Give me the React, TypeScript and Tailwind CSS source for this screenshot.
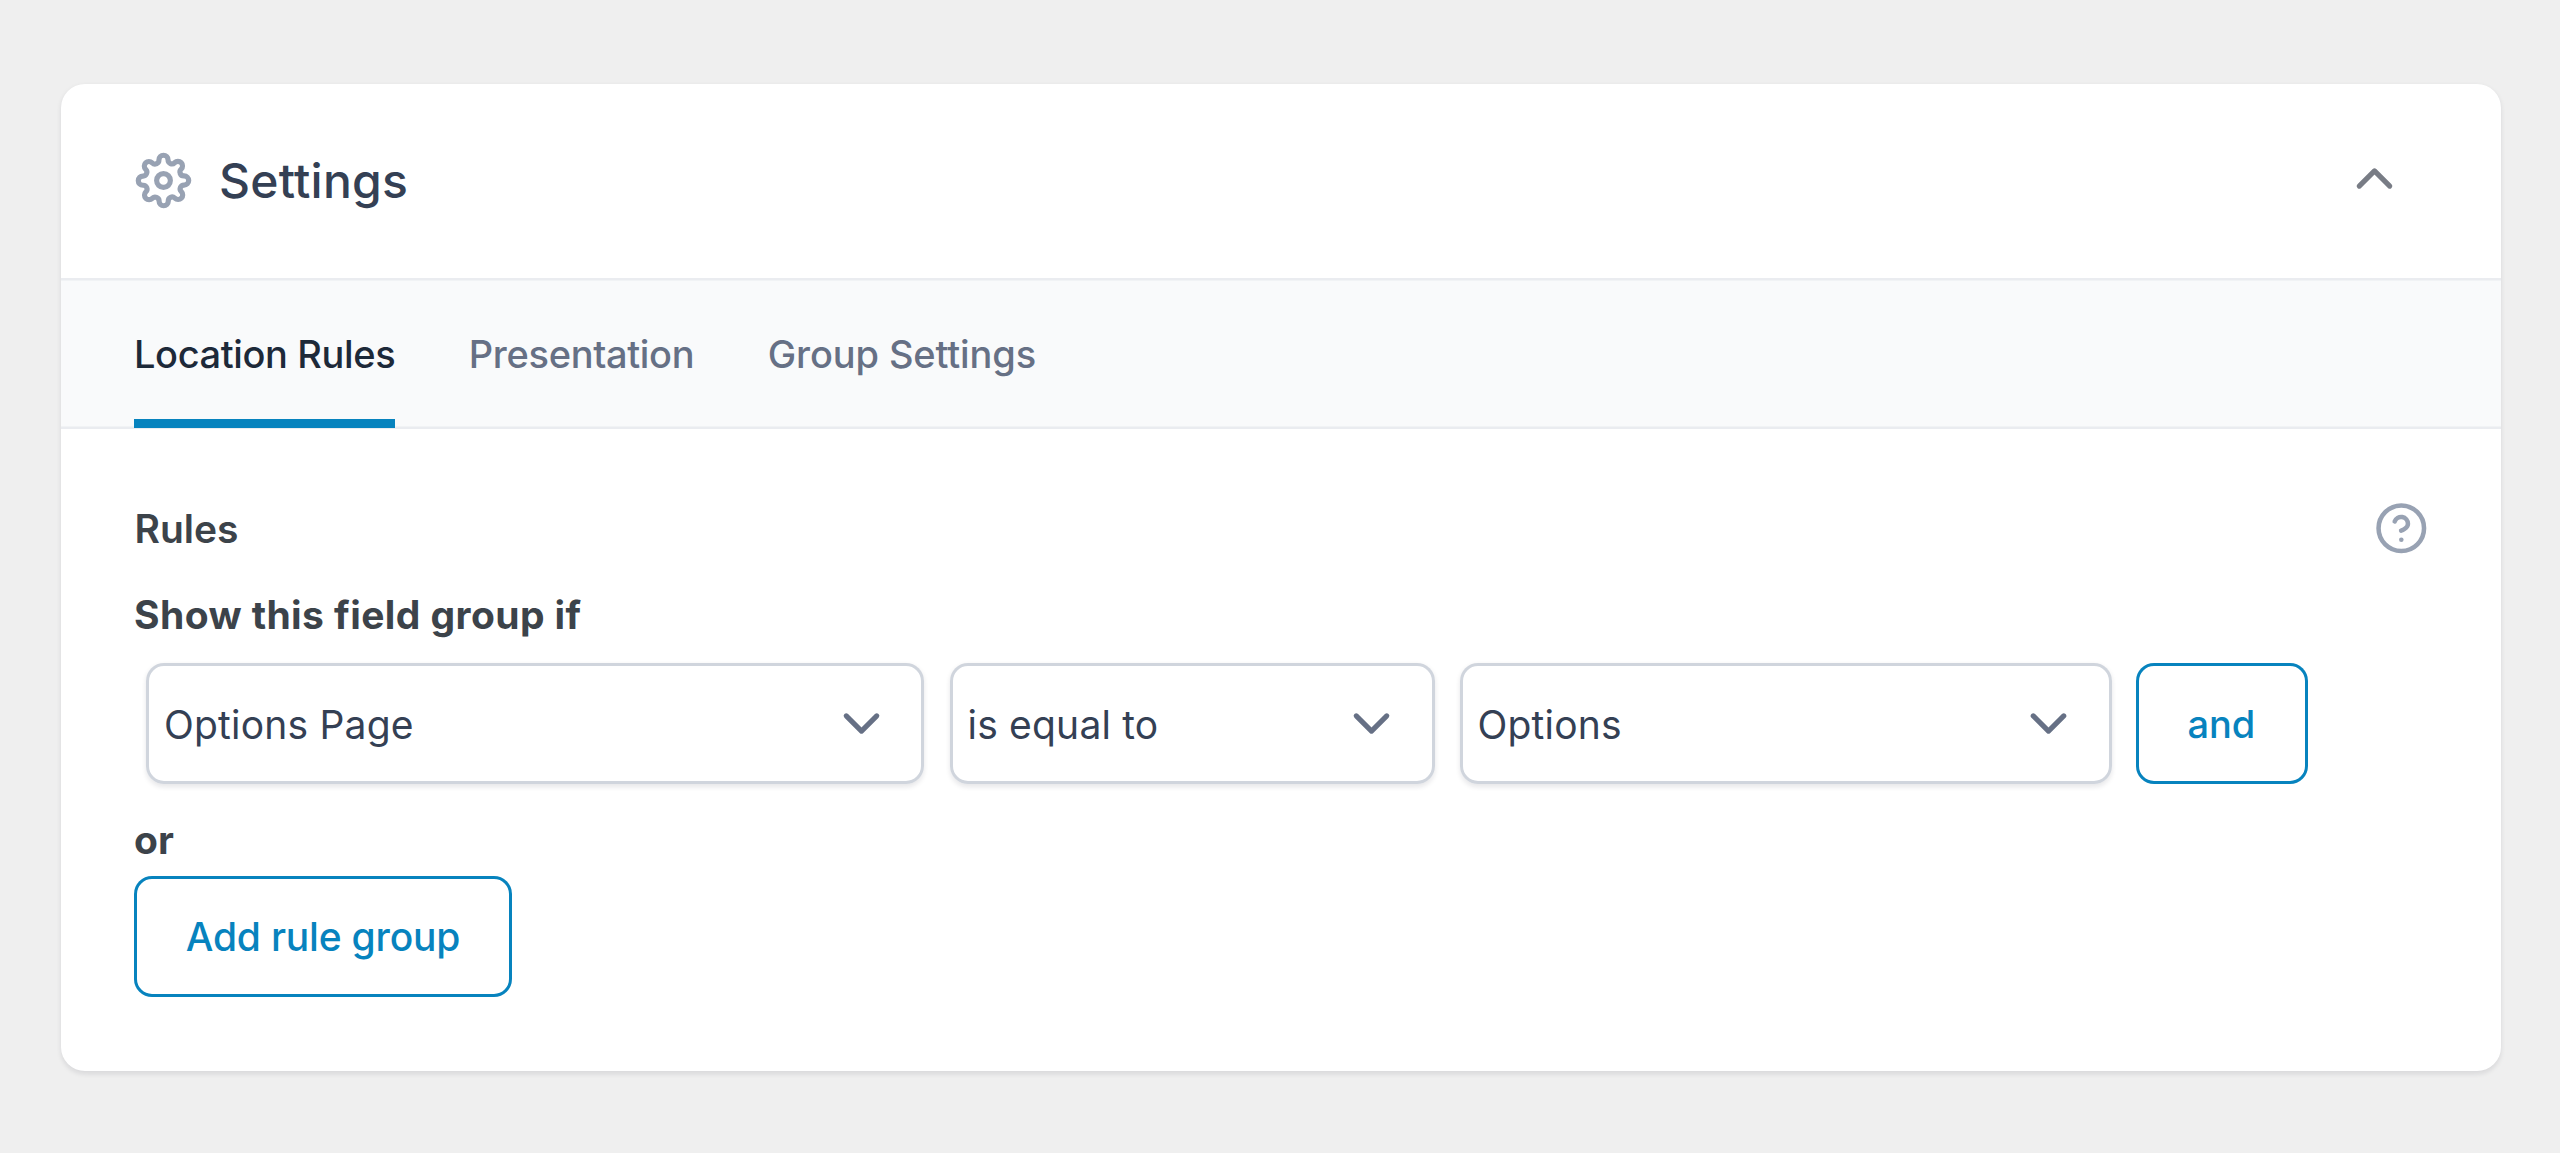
import type { ReactNode } from "react";

function Chevron({ up = false, className }: { up?: boolean; className: string }) {
  return (
    <svg viewBox="0 0 24 24" fill="none" stroke="currentColor" strokeWidth="2" strokeLinecap="round" strokeLinejoin="round" className={`size-[61px] shrink-0 ${className}`}>
      <polyline points={up ? "18 15 12 9 6 15" : "6 9 12 15 18 9"} />
    </svg>
  );
}

function Gear() {
  return (
    <svg viewBox="0 0 24 24" fill="none" stroke="currentColor" strokeWidth="2.25" strokeLinecap="round" strokeLinejoin="round" className="mb-[2px] size-[55px] shrink-0 overflow-visible text-[#98a2b3]">
      <circle cx="12" cy="12" r="3" />
      <path d="M19.4 15a1.65 1.65 0 0 0 .33 1.82l.06.06a2 2 0 0 1 0 2.83 2 2 0 0 1-2.83 0l-.06-.06a1.65 1.65 0 0 0-1.82-.33 1.65 1.65 0 0 0-1 1.51V21a2 2 0 0 1-2 2 2 2 0 0 1-2-2v-.09A1.65 1.65 0 0 0 9 19.4a1.65 1.65 0 0 0-1.82.33l-.06.06a2 2 0 0 1-2.83 0 2 2 0 0 1 0-2.83l.06-.06a1.65 1.65 0 0 0 .33-1.82 1.65 1.65 0 0 0-1.51-1H3a2 2 0 0 1-2-2 2 2 0 0 1 2-2h.09A1.65 1.65 0 0 0 4.6 9a1.65 1.65 0 0 0-.33-1.82l-.06-.06a2 2 0 0 1 0-2.83 2 2 0 0 1 2.83 0l.06.06a1.65 1.65 0 0 0 1.82.33H9a1.65 1.65 0 0 0 1-1.51V3a2 2 0 0 1 2-2 2 2 0 0 1 2 2v.09a1.65 1.65 0 0 0 1 1.51 1.65 1.65 0 0 0 1.82-.33l.06-.06a2 2 0 0 1 2.83 0 2 2 0 0 1 0 2.83l-.06.06a1.65 1.65 0 0 0-.33 1.82V9a1.65 1.65 0 0 0 1.51 1H21a2 2 0 0 1 2 2 2 2 0 0 1-2 2h-.09a1.65 1.65 0 0 0-1.51 1z" />
    </svg>
  );
}

function Help() {
  return (
    <svg viewBox="0 0 24 24" fill="none" stroke="currentColor" strokeWidth="2" strokeLinecap="round" strokeLinejoin="round" className="mb-[2px] size-[54.6px] shrink-0 text-[#98a2b3]">
      <circle cx="12" cy="12" r="10" />
      <path d="M9.09 9a3 3 0 0 1 5.83 1c0 2-3 3-3 3" />
      <line x1="12" y1="17" x2="12.01" y2="17" />
    </svg>
  );
}

function Select({ children, className }: { children: ReactNode; className: string }) {
  return (
    <button className={`flex h-[121px] items-center justify-between rounded-[18px] bg-white pr-[32.5px] pl-[18px] text-[39px] text-[#344054] shadow-[inset_0_0_0_3px_#d0d5dd,0_2.5px_5px_rgba(16,24,40,0.1)] ${className}`}>
      <span className="pt-[3px] tracking-[0.2px] whitespace-nowrap">{children}</span>
      <Chevron className="text-[#667085]" />
    </button>
  );
}

export default function App() {
  return (
    <div className="min-h-[1153px] bg-[#efefef] pt-[84px] pr-[59px] pl-[61px] font-['Inter',sans-serif]">
      <section className="h-[987px] overflow-hidden rounded-3xl bg-white shadow-[0_2.5px_5px_rgba(16,24,40,0.1)]">
        <header className="flex h-[194px] items-center pr-[96px] pl-[75px]">
          <Gear />
          <h2 className="ml-[28px] flex-1 text-[48px] font-medium tracking-[0.26px] text-[#344054]">Settings</h2>
          <Chevron up className="mb-[5px] text-[#787c85]" />
        </header>

        <nav className="flex h-[150.5px] gap-[73.5px] bg-[#f9fafb] pl-[73px] text-[38px] font-medium text-[#667085] shadow-[inset_0_2.5px_#eaecf0,inset_0_-2.5px_#eaecf0]">
          <button className="flex h-[150px] items-center border-b-[9px] border-[#0783be] pt-[11px] tracking-[-0.38px] text-[#1d2939]">Location Rules</button>
          <button className="flex h-[150px] items-center pt-[2px] tracking-[-0.325px]">Presentation</button>
          <button className="flex h-[150px] items-center pt-[2px] tracking-[-0.11px]">Group Settings</button>
        </nav>

        <div className="pt-[73px] pl-[73px] text-[39px] text-[#3c434a]">
          <div className="flex h-[55px] items-center justify-between pr-[72px]">
            <h3 className="pl-[0.5px] font-semibold">Rules</h3>
            <Help />
          </div>
          <h4 className="mt-[33px] h-[50px] leading-[50px] font-bold tracking-[0.41px]">Show this field group if</h4>
          <div className="mt-[23.5px] flex pl-[12px]">
            <Select className="w-[778px]">Options Page</Select>
            <Select className="ml-[25.5px] w-[485px]">is equal to</Select>
            <Select className="ml-[25px] w-[652px]">Options</Select>
            <button className="ml-[24.5px] flex h-[121px] w-[171.5px] items-center justify-center rounded-[18px] pt-[2px] pr-[1px] text-[38px] font-medium tracking-[-0.1px] text-[#0783be] shadow-[inset_0_0_0_3px_#0783be]">and</button>
          </div>
          <h4 className="mt-[30.5px] h-[50px] leading-[50px] font-bold">or</h4>
          <button className="mt-[11px] flex h-[121px] w-[378px] items-center justify-center rounded-[18px] pt-[3px] font-medium tracking-[-0.2px] text-[#0783be] shadow-[inset_0_0_0_3px_#0783be]">Add rule group</button>
        </div>
      </section>
    </div>
  );
}
